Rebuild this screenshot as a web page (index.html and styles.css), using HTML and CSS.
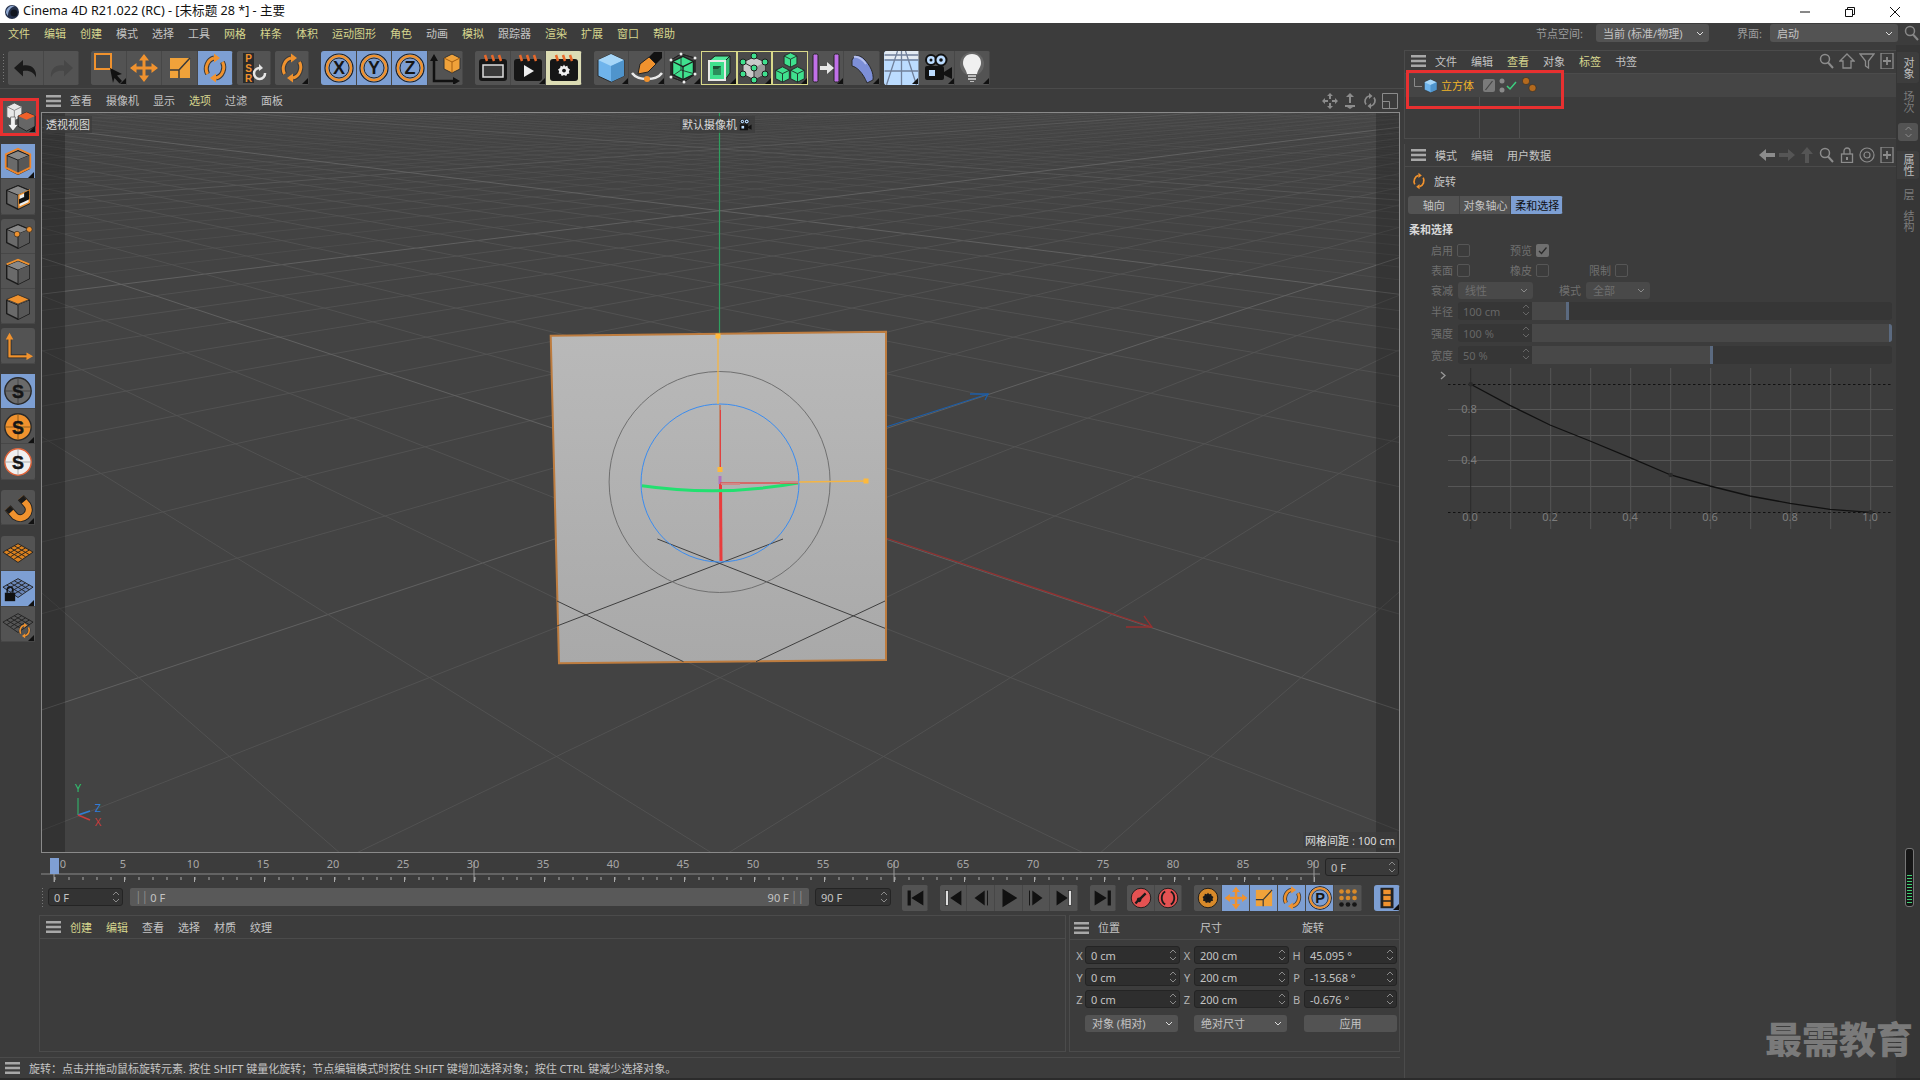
FILE: index.html
```html
<!DOCTYPE html>
<html lang="zh">
<head>
<meta charset="utf-8">
<title>Cinema 4D</title>
<link rel="stylesheet" href="styles.css">
</head>
<body>
<svg class="defs" width="0" height="0">
  <defs>
    <linearGradient id="floorg" x1="0" y1="0" x2="0" y2="1"><stop offset="0" stop-color="#b9b9b9"/><stop offset="1" stop-color="#a9a9a9"/></linearGradient>
    <symbol id="i-undo" viewBox="0 0 32 32"><path d="M4 16 13 8v5.500c8-1.500 14 3 13 12-2-5-6.500-7.500-13-6.500V24.500z" fill="#1a1a1a"/></symbol>
    <symbol id="i-redo" viewBox="0 0 32 32"><path d="M28 16 19 8v5.500c-8-1.500-14 3-13 12 2-5 6.500-7.500 13-6.500V24.500z" fill="#474747"/></symbol>
    <symbol id="i-select" viewBox="0 0 32 32"><rect x="2" y="2" width="16" height="15" fill="#4a4a4a" stroke="#f0922e" stroke-width="2"/><path d="M17 16l12 6-5 1.500 5 5.500-2.500 2.500-5-5.500-1.500 5z" fill="#111"/></symbol>
    <symbol id="i-move" viewBox="0 0 32 32"><path d="M16 7v18M7 16h18" stroke="#f0922e" stroke-width="3"/><path d="M16 2l5 6.500H11zM16 30l5-6.500H11zM2 16l6.500-5v10zM30 16l-6.500-5v10z" fill="#f0922e"/></symbol>
    <symbol id="i-scale" viewBox="0 0 32 32"><rect x="6" y="6" width="20" height="20" fill="#f0a23a"/><path d="M6 18h9v8M15 18 26 6" fill="none" stroke="#3a3a3a" stroke-width="1.500"/></symbol>
    <symbol id="i-rot" viewBox="0 0 32 32"><g fill="none"><path d="M8.500 22A10 11 0 0 1 15 6M23.500 10A10 11 0 0 1 17 26" stroke="#3a3a3a" stroke-width="5"/><path d="M8.500 22A10 11 0 0 1 15 6M23.500 10A10 11 0 0 1 17 26" stroke="#f0922e" stroke-width="3"/></g><path d="M15 1.500l6 4.500-6 4.500zM17 21.500 11 26l6 4.500z" fill="#f0922e"/></symbol>
    <symbol id="i-ring" viewBox="0 0 32 32"><circle cx="16" cy="16" r="14" fill="#7d9fd3" stroke="#1f1f1f" stroke-width="1.200"/><circle cx="16" cy="16" r="12" fill="none" stroke="#f0922e" stroke-width="2.500"/><circle cx="16" cy="16" r="10" fill="#7d9fd3" stroke="#2a2a2a"/></symbol>
    <symbol id="i-coord" viewBox="0 0 32 32"><path d="M5 8v21h22" fill="none" stroke="#111" stroke-width="2.500"/><path d="M5 2l4 7H1zM31 29l-7-4v8z" fill="#111"/><path d="M15 6l8-4 8 4v11l-8 4-8-4z" fill="#f0a23a" stroke="#333"/><path d="M15 6l8 4 8-4M23 10v11" fill="none" stroke="#a55f10"/></symbol>
    <symbol id="i-clap" viewBox="0 0 32 32"><rect x="2" y="7" width="28" height="22" rx="3" fill="#161616"/><path d="M8 3l2 6M15 3l2 6M22 3l2 6" stroke="#e8682a" stroke-width="2.500"/></symbol>
    <symbol id="i-gear" viewBox="0 0 16 16"><path d="M8 0l1.500 2.500 3-.7.700 3L16 6.500 14.500 9l.7 3-3 .7L11 15.300 8 14 5 15.300 3.800 12.700l-3-.7.700-3L0 6.500l2.800-1.700.7-3 3 .7z" fill="currentColor"/><circle cx="8" cy="8" r="2.500" fill="#161616"/></symbol>
    <symbol id="i-bcube" viewBox="0 0 32 32"><path d="M16 2 29 8v16l-13 6-13-6V8z" fill="#6fb4ec" stroke="#2a2a2a"/><path d="M3 8l13 6 13-6-13-6z" fill="#a6d6f8"/><path d="M16 14 29 8v16l-13 6z" fill="#4f94cc"/></symbol>
    <symbol id="i-pen" viewBox="0 0 32 32"><path d="M31 0h-8l-7 7 7 7 8-8z" fill="#111"/><path d="M18 5l7 7-8 8-10 2 2-10z" fill="#f0922e" stroke="#222"/><path d="M1 21c6 8 24 8 30 0" fill="none" stroke="#e8e8e8" stroke-width="2.500"/><circle cx="16" cy="27" r="3" fill="#f0922e"/></symbol>
    <symbol id="i-gc" viewBox="0 0 20 20"><path d="M10 1l8 4v10l-8 4-8-4V5z" fill="#3fe08e" stroke="#1d1d1d"/><path d="M2 5l8 4 8-4" fill="none" stroke="#1d1d1d"/><path d="M10 9v10" stroke="#1d1d1d"/></symbol>
    <symbol id="i-frame" viewBox="0 0 32 32"><path d="M4 8 14 2l14 4v16l-11 8-13-5z" fill="#444" stroke="#1d1d1d"/><use href="#i-gc" x="3" y="3" width="26" height="26"/><path d="M4 8 14 2l14 4v16l-11 8-13-5zM14 2v16l-10 7M14 18l14 4" fill="none" stroke="#222" stroke-width=".800"/><g fill="#eee"><circle cx="4" cy="8" r="1.500"/><circle cx="14" cy="2" r="1.500"/><circle cx="28" cy="6" r="1.500"/><circle cx="28" cy="22" r="1.500"/><circle cx="17" cy="30" r="1.500"/><circle cx="4" cy="25" r="1.500"/></g></symbol>
    <symbol id="i-hbox" viewBox="0 0 32 32"><path d="M6 9l6-5h15l-5 5z" fill="#4fe89a" stroke="#1d1d1d"/><path d="M22 9l5-5v17l-5 7z" fill="#35b873" stroke="#1d1d1d"/><rect x="6" y="9" width="16" height="19" fill="#3fe08e" stroke="#e8e8e8" stroke-width="2"/><path d="M10 14h8v9h-8z" fill="#2b8f5c"/><path d="M10 14h8l-3 3h-5z" fill="#1b4f35"/></symbol>
    <symbol id="i-nodes" viewBox="0 0 32 32"><path d="M16 5 27 10v12l-11 6-11-6V10z" fill="#c9c9c9" stroke="#333"/><path d="M16 16 27 10v12l-11 6z" fill="#9a9a9a"/><path d="M5 10l11 6v12" fill="none" stroke="#333"/><g fill="#3fe08e" stroke="#1d1d1d"><circle cx="16" cy="4" r="3"/><circle cx="5" cy="10" r="3"/><circle cx="27" cy="10" r="3"/><circle cx="16" cy="16" r="3"/><circle cx="5" cy="22" r="3"/><circle cx="27" cy="22" r="3"/><circle cx="16" cy="28" r="3"/></g></symbol>
    <symbol id="i-cubes" viewBox="0 0 32 32"><use href="#i-gc" x="8.500" y="0" width="16" height="16"/><use href="#i-gc" x="0" y="14" width="17" height="17"/><use href="#i-gc" x="15" y="14" width="17" height="17"/></symbol>
    <symbol id="i-bend" viewBox="0 0 32 32"><rect x="3" y="2" width="5" height="28" rx="1.500" fill="#c070e8" stroke="#222"/><rect x="24" y="2" width="5" height="28" rx="1.500" fill="#c070e8" stroke="#222"/><path d="M10 14h7v-4l7 6-7 6v-4h-7z" fill="#e6e6e6"/></symbol>
    <symbol id="i-slab" viewBox="0 0 32 32"><path d="M6 8C9 2 14 3 18 7 24 13 28 21 27 28l-6 3C17 21 11 15 6 14z" fill="#7d8fd8" stroke="#2a2a2a"/><path d="M8 5c5-1 9 3 12 7" fill="none" stroke="#b6c0ee" stroke-width="2"/></symbol>
    <symbol id="i-floor" viewBox="0 0 34 34"><rect x="0" y="0" width="34" height="8" fill="#e3ebf3"/><rect x="0" y="8" width="34" height="26" fill="#bcdcff"/><path d="M0 4h34M0 9h34M0 20h34M13 0 2 34M21 0 32 34M17 0v34" stroke="#71809a" stroke-width="1.300" fill="none"/></symbol>
    <symbol id="i-cam" viewBox="0 0 32 32"><circle cx="10" cy="8" r="5" fill="#bcdcff" stroke="#111" stroke-width="2"/><circle cx="20" cy="8" r="5.500" fill="#bcdcff" stroke="#111" stroke-width="2"/><circle cx="10" cy="8" r="1.500" fill="#111"/><circle cx="20" cy="8" r="1.800" fill="#111"/><rect x="4" y="14" width="19" height="14" rx="2" fill="#111"/><rect x="8" y="18" width="6" height="6" fill="#bcdcff"/><path d="M23 20l8-5v12l-8-4z" fill="#111"/></symbol>
    <symbol id="i-bulb" viewBox="0 0 32 32"><circle cx="16" cy="12" r="12" fill="#8a8a8a" opacity=".35"/><path d="M16 2c6 0 9 4 9 9 0 4-3 6-4 11H11c-1-5-4-7-4-11 0-5 3-9 9-9z" fill="#f0f0f0"/><path d="M12 23h8v2h-8zM12 26h8v2h-8zM14 29h4v1h-4z" fill="#bdbdbd"/></symbol>
    <symbol id="i-gcube" viewBox="0 0 34 34"><path d="M17 5 29 10v14l-12 6-12-6V10z" fill="#6a6a6a" stroke="#1a1a1a" stroke-width="1.500"/><path d="M5 10l12 5 12-5-12-5z" fill="#888" stroke="#1a1a1a" stroke-width="1"/><path d="M17 15 29 10v14l-12 6z" fill="#575757"/><path d="M17 15v15" stroke="#1a1a1a"/></symbol>
    <symbol id="i-mode" viewBox="0 0 34 34"><path d="M3 6l8-4 8 4v11l-8 4-8-4z" fill="#e8e8e8" stroke="#555"/><path d="M3 6l8 4 8-4M11 10v11" fill="none" stroke="#888"/><path d="M15 16l9-4 9 4v11l-9 5-9-5z" fill="#666" stroke="#222"/><path d="M15 16l9 4 9-4-9-4z" fill="#f0602a"/><path d="M7 17h5v8h3l-5.500 7L4 25h3z" fill="#f2f2f2" stroke="#333" stroke-width=".600"/></symbol>
    <symbol id="i-lozenge" viewBox="0 0 34 34"><path d="M17 6 33 15 17 26 1 15z" fill="currentColor" stroke="#222"/><path d="M9 10.500l16 9.500M13 8.200l16 9.500M5 12.800l16 9.500M25 10.500 9 20M21 8.200 5 17.700M29 12.800l-16 9.500" stroke="#222" stroke-width="1"/></symbol>
    <symbol id="i-spin" viewBox="0 0 8 14"><path d="M1 5 4 2l3 3M1 9l3 3 3-3" fill="none" stroke="currentColor"/></symbol>
    <symbol id="i-menu" viewBox="0 0 15 12"><path d="M0 0h15v2.500H0zM0 4.700h15v2.500H0zM0 9.400h15v2.500H0z" fill="currentColor"/></symbol>
    <symbol id="i-search" viewBox="0 0 16 16"><circle cx="6" cy="6" r="4.500" fill="none" stroke="currentColor" stroke-width="1.500"/><path d="M9 9.500l5 5.500" stroke="currentColor" stroke-width="2"/></symbol>
    <symbol id="i-plus" viewBox="0 0 16 16"><rect x="2" y="0" width="12" height="16" fill="none" stroke="currentColor" stroke-width="1.300"/><path d="M8 4v8M4 8h8" stroke="currentColor" stroke-width="1.800"/></symbol>
    <symbol id="i-chev" viewBox="0 0 8 5"><path d="M1 1l3 3 3-3" fill="none" stroke="currentColor"/></symbol>
  </defs>
</svg>

<div class="app">
  <header class="titlebar">
    <svg class="logo" viewBox="0 0 16 16"><circle cx="8" cy="8" r="7" fill="#24304a"/><path d="M2 9a7 7 0 0 1 9-7C7 3 4 6 4 12z" fill="#8fa8d0"/><circle cx="10" cy="9" r="3.500" fill="#11161f"/></svg>
    <span class="title">Cinema 4D R21.022 (RC) - [未标题 28 *] - 主要</span>
    <div class="winctl">
      <svg width="10" height="10" viewBox="0 0 10 10"><path d="M0 5h10" stroke="#111"/></svg>
      <svg width="10" height="10" viewBox="0 0 10 10"><path d="M.5 2.500h7v7h-7zM2.500 2.500v-2h7v7h-2" fill="none" stroke="#111"/></svg>
      <svg width="10" height="10" viewBox="0 0 10 10"><path d="M0 0l10 10M10 0 0 10" stroke="#111"/></svg>
    </div>
  </header>

  <nav class="menubar">
    <span class="y">文件</span><span class="y">编辑</span><span class="y">创建</span><span>模式</span><span>选择</span><span>工具</span><span class="y">网格</span><span class="y">样条</span><span class="y">体积</span><span class="y">运动图形</span><span class="y">角色</span><span>动画</span><span class="y">模拟</span><span>跟踪器</span><span class="y">渲染</span><span class="y">扩展</span><span class="y">窗口</span><span class="y">帮助</span>
    <span class="node-label">节点空间:</span>
    <div class="select sel-node">当前 (标准/物理)<svg class="chev"><use href="#i-chev"/></svg></div>
    <span class="ui-label">界面:</span>
    <div class="select sel-ui">启动<svg class="chev"><use href="#i-chev"/></svg></div>
    <svg class="top-search"><use href="#i-search"/></svg>
  </nav>

  <main class="main">
    <section class="leftcol">
      <div class="toolbar">
        <div class="grip-v"></div>
        <div class="group"><div class="tb"><svg class="ic"><use href="#i-undo"/></svg></div><div class="tb"><svg class="ic"><use href="#i-redo"/></svg></div></div>
        <div class="group sep"><div class="tb more"><svg class="ic"><use href="#i-select"/></svg></div><div class="tb"><svg class="ic"><use href="#i-move"/></svg></div><div class="tb"><svg class="ic"><use href="#i-scale"/></svg></div><div class="tb on"><svg class="ic"><use href="#i-rot"/></svg></div></div>
        <div class="group"><div class="tb narrow">
          <svg class="ic" viewBox="0 0 32 32"><rect x="5" y="1" width="11" height="30" fill="#2a2a2a"/><text class="psr" x="10.500" y="10">P</text><text class="psr" x="10.500" y="20">S</text><text class="psr" x="10.500" y="30">R</text><path d="M27 21a5.500 5.500 0 1 1-5-5" fill="none" stroke="#e6e6e6" stroke-width="2.500"/><path d="M21 12l4 4-4 3z" fill="#e6e6e6"/></svg>
        </div></div>
        <div class="group"><div class="tb narrow more"><svg class="ic"><use href="#i-rot"/></svg></div></div>
        <div class="group sep"><div class="tb on">
          <svg class="ic" viewBox="0 0 32 32"><use href="#i-ring"/><text class="axis" x="16" y="22">X</text></svg></div><div class="tb on">
          <svg class="ic" viewBox="0 0 32 32"><use href="#i-ring"/><text class="axis" x="16" y="22">Y</text></svg></div><div class="tb on">
          <svg class="ic" viewBox="0 0 32 32"><use href="#i-ring"/><text class="axis" x="16" y="22">Z</text></svg></div><div class="tb"><svg class="ic"><use href="#i-coord"/></svg></div></div>
        <div class="group sep">
          <div class="tb"><svg class="ic" viewBox="0 0 32 32"><use href="#i-clap"/><rect x="6" y="13" width="20" height="12" fill="#3a3a3a" stroke="#ddd" stroke-width="1.500"/></svg></div>
          <div class="tb more"><svg class="ic" viewBox="0 0 32 32"><use href="#i-clap"/><path d="M12 13l10 6-10 6z" fill="#eee"/></svg></div>
          <div class="tb cream"><svg class="ic" viewBox="0 0 32 32"><use href="#i-clap"/><use href="#i-gear" x="10" y="12" width="12" height="13" color="#eee"/></svg></div>
        </div>
        <div class="group sep">
          <div class="tb wide more"><svg class="ic"><use href="#i-bcube"/></svg></div>
          <div class="tb wide more"><svg class="ic"><use href="#i-pen"/></svg></div>
          <div class="tb wide more"><svg class="ic"><use href="#i-frame"/></svg></div>
          <div class="tb wide lit more"><svg class="ic"><use href="#i-hbox"/></svg></div>
          <div class="tb wide lit more"><svg class="ic"><use href="#i-nodes"/></svg></div>
          <div class="tb wide lit more"><svg class="ic"><use href="#i-cubes"/></svg></div>
          <div class="tb wide more"><svg class="ic"><use href="#i-bend"/></svg></div>
          <div class="tb wide more"><svg class="ic"><use href="#i-slab"/></svg></div>
        </div>
        <div class="group">
          <div class="tb more flush"><svg class="ic-full"><use href="#i-floor"/></svg></div>
          <div class="tb more"><svg class="ic"><use href="#i-cam"/></svg></div>
          <div class="tb more"><svg class="ic"><use href="#i-bulb"/></svg></div>
        </div>
      </div>

      <div class="mid">
        <aside class="leftbar">
          <div class="modebox"><div class="lb more"><svg class="ic"><use href="#i-mode"/></svg></div></div>
          <div class="group-v g-a">
            <div class="lb on more"><svg class="ic"><use href="#i-gcube"/></svg><svg class="ic-over" viewBox="0 0 34 34"><path d="M17 4 30 10v14l-13 6.500L4 24V10z" fill="none" stroke="#f0862a" stroke-width="2"/></svg></div>
            <div class="lb"><svg class="ic"><use href="#i-gcube"/></svg><svg class="ic-over" viewBox="0 0 34 34"><path d="M18 16 29 11v13l-11 5z" fill="#eee" stroke="#f0922e" stroke-width="1.500"/><path d="M18 20.500l5.500-2.500v5l-5.500 2.500zM23.500 13.500l5.500-2.500v5l-5.500 2.500zM23.500 18l5.500-2.500v5L23.500 23z" fill="#111"/></svg></div>
          </div>
          <div class="group-v">
            <div class="lb"><svg class="ic"><use href="#i-gcube"/></svg><svg class="ic-over" viewBox="0 0 34 34"><circle cx="16" cy="15" r="3" fill="#f0922e" stroke="#222" stroke-width=".700"/><circle cx="29" cy="10" r="3" fill="#f0922e" stroke="#222" stroke-width=".700"/></svg></div>
            <div class="lb"><svg class="ic"><use href="#i-gcube"/></svg><svg class="ic-over" viewBox="0 0 34 34"><path d="M5 10 17 5l12 5" fill="none" stroke="#f0922e" stroke-width="2"/></svg></div>
            <div class="lb"><svg class="ic"><use href="#i-gcube"/></svg><svg class="ic-over" viewBox="0 0 34 34"><path d="M5 10l12 5 12-5-12-5z" fill="#f0922e" stroke="#222" stroke-width=".700"/></svg></div>
          </div>
          <div class="group-v"><div class="lb"><svg class="ic" viewBox="0 0 34 34"><path d="M8 8v20h19" fill="none" stroke="#222" stroke-width="4"/><path d="M8 8v20h19" fill="none" stroke="#f0922e" stroke-width="2.500"/><path d="M8 3l4 7H4zM33 28l-7-4v8z" fill="#f0922e"/></svg></div></div>
          <div class="group-v g-far">
            <div class="lb on"><svg class="ic" viewBox="0 0 34 34"><circle cx="17" cy="17" r="14" fill="#6a6a6a" stroke="#2a2a2a" stroke-width="1.500"/><path d="M3 17h28M17 3v28" stroke="#444"/><text class="snap" x="17" y="24">S</text></svg></div>
            <div class="lb more"><svg class="ic" viewBox="0 0 34 34"><circle cx="17" cy="17" r="14" fill="#f0922e" stroke="#2a2a2a" stroke-width="1.500"/><path d="M3 17h28M17 3v28" stroke="#8a5a1c"/><text class="snap" x="17" y="24">S</text></svg></div>
            <div class="lb"><svg class="ic" viewBox="0 0 34 34"><circle cx="17" cy="17" r="14" fill="#f0f0f0" stroke="#e0643a" stroke-width="1.500"/><path d="M3 17h28M17 3v28" stroke="#aaa"/><text class="snap" x="17" y="24">S</text></svg></div>
          </div>
          <div class="group-v g-far"><div class="lb more"><svg class="ic" viewBox="0 0 34 34"><path d="M20 7 27 15A9 9 0 0 1 14 27L6 18" fill="none" stroke="#222" stroke-width="8.500"/><path d="M20 7 27 15A9 9 0 0 1 14 27L6 18" fill="none" stroke="#f0922e" stroke-width="6.500"/><path d="M20 7 23.500 11M6 18l3.800 4" stroke="#1a1a1a" stroke-width="7"/></svg></div></div>
          <div class="group-v g-last">
            <div class="lb"><svg class="ic lz-o"><use href="#i-lozenge"/></svg></div>
            <div class="lb on more"><svg class="ic lz-b"><use href="#i-lozenge"/></svg><svg class="ic-over" viewBox="0 0 34 34"><rect x="3" y="22" width="11" height="9" fill="#111"/><path d="M5.500 22v-3a3 3 0 0 1 6 0v3" fill="none" stroke="#111" stroke-width="1.500"/></svg></div>
            <div class="lb more"><svg class="ic lz-d"><use href="#i-lozenge"/></svg><svg class="ic-over" viewBox="0 0 34 34"><use href="#i-rot" x="15" y="15" width="18" height="18"/></svg></div>
          </div>
        </aside>

        <div class="center">
          <div class="vp-head">
            <svg class="menu-ic"><use href="#i-menu"/></svg>
            <div class="menu-items"><span>查看</span><span>摄像机</span><span>显示</span><span class="y">选项</span><span>过滤</span><span>面板</span></div>
            <div class="nav-ics">
              <svg width="16" height="16" viewBox="0 0 16 16"><path d="M8 0l3 3H9v3H7V3H5zM8 16l3-3H9v-3H7v3H5zM0 8l3-3v2h3v2H3v2zM16 8l-3-3v2h-3v2h3v2z" fill="currentColor"/></svg>
              <svg width="16" height="16" viewBox="0 0 16 16"><path d="M8 0l4 4H9v6H7V4H4zM3 12h10v2H3z" fill="currentColor"/><path d="M8 16l3-2H5z" fill="currentColor"/></svg>
              <svg width="16" height="16" viewBox="0 0 16 16"><path d="M4 11.500A5.500 5.500 0 0 1 7 3M12 4.500A5.500 5.500 0 0 1 9 13" fill="none" stroke="currentColor" stroke-width="1.700"/><path d="M7 0l3.500 3L7 6zM9 10l-3.500 3L9 16z" fill="currentColor"/></svg>
              <svg width="16" height="16" viewBox="0 0 16 16"><path d="M.5.5h15v15H.5zM.5 8.500h7v7" fill="none" stroke="currentColor"/></svg>
            </div>
          </div>

          <div class="viewport">
            <svg class="scene" viewBox="41 112 1359 741" preserveAspectRatio="none">
              <rect x="41" y="112" width="1359" height="741" fill="#434343"/>
              <g id="grid"></g>
              <rect x="41" y="112" width="24" height="741" fill="#000" opacity=".24"/>
              <rect x="1376" y="112" width="24" height="741" fill="#000" opacity=".2"/>
              <path d="M719.500 112V336" stroke="#2f9f5f" stroke-width="1.200"/>
              <path d="M886 427 988 394" stroke="#1c5ea8" stroke-width="1.300"/>
              <path d="M970 394h18l-3 6" fill="none" stroke="#1c5ea8" stroke-width="1.300"/>
              <path d="M886 538 1152 627" stroke="#963030" stroke-width="1.300"/>
              <path d="M1126 627h26l-8-11" fill="none" stroke="#963030" stroke-width="1.300"/>
              <path d="M550.700 335.700 886 331.700V660L559 663.300z" fill="url(#floorg)" stroke="#bd7c3f" stroke-width="2"/>
              <g fill="none" stroke="#3f3f3f" stroke-width="1">
                <path d="M657.400 539 885 628.300M783 539 557 626M557 601 683.500 661.700M885 601 756 661.700"/>
              </g>
              <circle cx="719.600" cy="482" r="110.500" fill="none" stroke="#707070" stroke-width="1"/>
              <circle cx="720" cy="483" r="79" fill="none" stroke="#3a8cf0" stroke-width="1"/>
              <path d="M718 336V404" stroke="#f4b545" stroke-width="1.300"/>
              <path d="M720 405V470" stroke="#c07a58" stroke-width="1.500"/>
              <path d="M720.500 470V410" stroke="#e04040" stroke-width="1"/>
              <path d="M720 476V484" stroke="#b070c0" stroke-width="3"/>
              <path d="M720.500 484 721 561" stroke="#e83c3c" stroke-width="3"/>
              <path d="M642 485.700Q720 497 798 483" fill="none" stroke="#22e070" stroke-width="3"/>
              <path d="M720 483H798" stroke="#e05050" stroke-width="1.500"/>
              <path d="M721 484H740M780 482H798" stroke="#d08888" stroke-width="2"/>
              <path d="M799 482 866 481" stroke="#f4b545" stroke-width="1.300"/>
              <g fill="#fdb93c"><rect x="715.500" y="333.500" width="5" height="5"/><rect x="717.500" y="467" width="5" height="5"/><rect x="863.500" y="478.500" width="5" height="5"/></g>
              <path d="M78 815V798" stroke="#2fbf6f"/><path d="M78 815 90 811" stroke="#2f7fd8" stroke-width="1.500"/><path d="M78 815 90 820" stroke="#c83c3c" stroke-width="1.500"/>
              <text class="mini m-y" x="78" y="792">Y</text><text class="mini m-z" x="98" y="812">Z</text><text class="mini m-x" x="98" y="826">X</text>
            </svg>
            <div class="vp-label vp-persp">透视视图</div>
            <div class="vp-label vp-cam">默认摄像机<svg width="16" height="14" viewBox="0 0 32 32"><use href="#i-cam"/></svg></div>
            <div class="vp-label vp-grid">网格间距 : 100 cm</div>
          </div>

          <div class="ruler-row">
            <svg class="ruler" viewBox="41 853 1279 31">
              <defs>
                <pattern id="tk" x="54.500" y="877" width="14" height="4" patternUnits="userSpaceOnUse"><rect width="1" height="3" fill="#a8a8a8"/></pattern>
                <pattern id="tk5" x="54" y="877" width="70" height="5" patternUnits="userSpaceOnUse"><rect width="1" height="5" fill="#a8a8a8"/></pattern>
              </defs>
              <rect x="54" y="877" width="1261" height="3" fill="url(#tk)"/>
              <rect x="54" y="877" width="1261" height="5" fill="url(#tk5)"/>
              <path d="M41 874H1320" stroke="#8a8a8a"/>
              <path d="M54 874V882M474 862V882M894 862V882M1314 862V882" stroke="#9a9a9a"/>
              <rect x="50" y="858" width="9" height="16" fill="#7f9fd4"/>
              <g class="rl"><text x="63" y="868">0</text><text x="123" y="868">5</text><text x="193" y="868">10</text><text x="263" y="868">15</text><text x="333" y="868">20</text><text x="403" y="868">25</text><text x="473" y="868">30</text><text x="543" y="868">35</text><text x="613" y="868">40</text><text x="683" y="868">45</text><text x="753" y="868">50</text><text x="823" y="868">55</text><text x="893" y="868">60</text><text x="963" y="868">65</text><text x="1033" y="868">70</text><text x="1103" y="868">75</text><text x="1173" y="868">80</text><text x="1243" y="868">85</text><text x="1313" y="868">90</text></g>
            </svg>
            <div class="field f-end">0 F<svg class="spin"><use href="#i-spin"/></svg></div>
          </div>

          <div class="transport">
            <div class="grip-v t-grip"></div>
            <div class="field f-start">0 F<svg class="spin"><use href="#i-spin"/></svg></div>
            <div class="range"><span class="bars">||</span><span class="r-l">0 F</span><span class="r-r">90 F</span><span class="bars">||</span></div>
            <div class="field f-stop">90 F<svg class="spin"><use href="#i-spin"/></svg></div>
            <div class="group g-t1"><div class="pb"><svg viewBox="0 0 28 26"><path d="M6 5h3.500v16H6zM23 5v16L10 13z" fill="#111"/></svg></div></div>
            <div class="group g-t2">
              <div class="pb five"><svg viewBox="0 0 28 26"><rect x="6" y="5" width="3" height="16" fill="#ddd" stroke="#222" stroke-width=".700"/><path d="M23 5v16L11 13z" fill="#111"/></svg></div>
              <div class="pb five"><svg viewBox="0 0 28 26"><path d="M18 5v16L7 13z" fill="#111"/><path d="M21 5v16" stroke="#111"/></svg></div>
              <div class="pb five"><svg viewBox="0 0 28 26"><path d="M7 3v20l16-10z" fill="#111"/></svg></div>
              <div class="pb five"><svg viewBox="0 0 28 26"><path d="M10 5v16l11-8z" fill="#111"/><path d="M7 5v16" stroke="#111"/></svg></div>
              <div class="pb five"><svg viewBox="0 0 28 26"><path d="M6 5v16l12-8z" fill="#111"/><rect x="19" y="5" width="3" height="16" fill="#ddd" stroke="#222" stroke-width=".700"/></svg></div>
            </div>
            <div class="group g-t3"><div class="pb"><svg viewBox="0 0 28 26"><path d="M5 5v16l13-8z" fill="#111"/><path d="M19 5h3.500v16H19z" fill="#111"/></svg></div></div>
            <div class="group g-t4">
              <div class="pb"><svg viewBox="0 0 28 26"><circle cx="14" cy="13" r="10.500" fill="#e45252" stroke="#1a1a1a"/><path d="M19 8l-6 6M8 19l4-4.500" stroke="#1a1a1a" stroke-width="2.500"/><circle cx="12" cy="15" r="2.500" fill="#1a1a1a"/></svg></div>
              <div class="pb"><svg viewBox="0 0 28 26"><circle cx="14" cy="13" r="10.500" fill="#e45252" stroke="#1a1a1a"/><path d="M11 6c-5 3-5 11 0 14M17 6c5 3 5 11 0 14" fill="none" stroke="#1a1a1a" stroke-width="2"/></svg></div>
            </div>
            <div class="group g-t5">
              <div class="pb"><svg viewBox="0 0 28 26"><circle cx="14" cy="13" r="10.500" fill="#d88a2a" stroke="#1a1a1a"/><use href="#i-gear" x="8" y="7" width="12" height="12" color="#1a1a1a"/></svg></div>
              <div class="pb on"><svg viewBox="0 0 32 32"><use href="#i-move"/></svg></div>
              <div class="pb on"><svg viewBox="0 0 32 32"><use href="#i-scale"/></svg></div>
              <div class="pb on"><svg viewBox="0 0 32 32"><use href="#i-rot"/></svg></div>
              <div class="pb on"><svg viewBox="0 0 32 32"><use href="#i-ring"/><text class="axis" x="16" y="22">P</text></svg></div>
              <div class="pb"><svg viewBox="0 0 28 26"><g fill="#d88a2a"><circle cx="7" cy="6" r="2.500"/><circle cx="14" cy="6" r="2.500"/><circle cx="21" cy="6" r="2.500"/><circle cx="7" cy="13" r="2.500"/><circle cx="14" cy="13" r="2.500"/><circle cx="21" cy="13" r="2.500"/></g><g fill="#161616"><circle cx="7" cy="20" r="2.500"/><circle cx="14" cy="20" r="2.500"/><circle cx="21" cy="20" r="2.500"/></g></svg></div>
            </div>
            <div class="group g-t6"><div class="pb on more"><svg viewBox="0 0 28 26"><rect x="7" y="2" width="14" height="22" fill="#222"/><path d="M10 4h8v5h-8zM10 10.500h8v5h-8zM10 17h8v5h-8z" fill="#f0922e"/></svg></div></div>
          </div>

          <div class="bottom">
            <section class="materials">
              <div class="panel-head">
                <svg class="menu-ic"><use href="#i-menu"/></svg>
                <div class="menu-items"><span class="y">创建</span><span class="y">编辑</span><span>查看</span><span>选择</span><span>材质</span><span>纹理</span></div>
              </div>
            </section>
            <section class="coords">
              <div class="coord-head">
                <svg class="menu-ic"><use href="#i-menu"/></svg>
                <span class="ch-a">位置</span><span class="ch-b">尺寸</span><span class="ch-c">旋转</span>
              </div>
              <div class="coord-grid">
                <span class="cl">X</span><div class="field">0 cm<svg class="spin"><use href="#i-spin"/></svg></div><span class="cl">X</span><div class="field">200 cm<svg class="spin"><use href="#i-spin"/></svg></div><span class="cl">H</span><div class="field">45.095 °<svg class="spin"><use href="#i-spin"/></svg></div>
                <span class="cl">Y</span><div class="field">0 cm<svg class="spin"><use href="#i-spin"/></svg></div><span class="cl">Y</span><div class="field">200 cm<svg class="spin"><use href="#i-spin"/></svg></div><span class="cl">P</span><div class="field">-13.568 °<svg class="spin"><use href="#i-spin"/></svg></div>
                <span class="cl">Z</span><div class="field">0 cm<svg class="spin"><use href="#i-spin"/></svg></div><span class="cl">Z</span><div class="field">200 cm<svg class="spin"><use href="#i-spin"/></svg></div><span class="cl">B</span><div class="field">-0.676 °<svg class="spin"><use href="#i-spin"/></svg></div>
                <span></span><div class="select c-sel">对象 (相对)<svg class="chev"><use href="#i-chev"/></svg></div><span></span><div class="select c-sel">绝对尺寸<svg class="chev"><use href="#i-chev"/></svg></div><span></span><div class="apply">应用</div>
              </div>
            </section>
          </div>
        </div>
      </div>

      <footer class="status">
        <svg class="menu-ic"><use href="#i-menu"/></svg>
        <span>旋转：点击并拖动鼠标旋转元素. 按住 SHIFT 键量化旋转；节点编辑模式时按住 SHIFT 键增加选择对象；按住 CTRL 键减少选择对象。</span>
      </footer>
    </section>

    <section class="rightcol">
      <div class="panels">
        <section class="objects">
          <div class="panel-head">
            <svg class="menu-ic"><use href="#i-menu"/></svg>
            <div class="menu-items"><span>文件</span><span>编辑</span><span class="y">查看</span><span>对象</span><span class="y">标签</span><span>书签</span></div>
            <div class="head-ics">
              <svg><use href="#i-search"/></svg>
              <svg viewBox="0 0 16 16"><path d="M8 1 15 8h-3v7H4V8H1z" fill="none" stroke="currentColor" stroke-width="1.300"/></svg>
              <svg viewBox="0 0 16 16"><path d="M1 1h14L9.500 8v7l-3-2V8z" fill="none" stroke="currentColor" stroke-width="1.300"/></svg>
              <svg><use href="#i-plus"/></svg>
            </div>
          </div>
          <div class="obj-body">
            <div class="obj-row">
              <svg class="tree" width="8" height="9" viewBox="0 0 8 9"><path d="M.5 0v8.500H8" fill="none" stroke="#8a8a8a"/></svg>
              <svg class="obj-cube" viewBox="0 0 32 32"><use href="#i-bcube"/></svg>
              <span class="obj-name">立方体</span>
              <svg class="obj-tags" width="64" height="18" viewBox="0 0 64 18"><rect x="0" y="2" width="12" height="13" rx="2" fill="#7a7a7a"/><path d="M2.500 13 9.500 4" stroke="#444" stroke-width="1.200"/><circle cx="19" cy="4" r="2.500" fill="#8a8a8a"/><circle cx="19" cy="13" r="2.500" fill="#8a8a8a"/><path d="M24 9l3 3 6-7" fill="none" stroke="#3cd080" stroke-width="1.500"/><circle cx="43" cy="4" r="3.600" fill="#b46a1e" stroke="#222" stroke-width=".500"/><circle cx="49.500" cy="11" r="3.600" fill="#b46a1e" stroke="#222" stroke-width=".500"/></svg>
            </div>
            <div class="col-lines"></div>
            <div class="red-box"></div>
          </div>
        </section>
        <section class="attrs">
          <div class="panel-head">
            <svg class="menu-ic"><use href="#i-menu"/></svg>
            <div class="menu-items"><span>模式</span><span>编辑</span><span>用户数据</span></div>
            <div class="head-ics a-ics">
              <svg viewBox="0 0 16 16"><path d="M0 8l7-6v4h9v4H7v4z" fill="currentColor"/></svg>
              <svg class="dim" viewBox="0 0 16 16"><path d="M16 8 9 2v4H0v4h9v4z" fill="currentColor"/></svg>
              <svg class="dim" viewBox="0 0 16 16"><path d="M8 0l6 7h-4v9H6V7H2z" fill="currentColor"/></svg>
              <svg><use href="#i-search"/></svg>
              <svg viewBox="0 0 16 16"><rect x="2.500" y="7" width="11" height="8.500" fill="none" stroke="currentColor" stroke-width="1.300"/><path d="M5 7V4a3 3 0 0 1 6 0v3" fill="none" stroke="currentColor" stroke-width="1.300"/><rect x="7" y="10" width="2" height="3" fill="currentColor"/></svg>
              <svg viewBox="0 0 16 16"><circle cx="8" cy="8" r="7" fill="none" stroke="currentColor" stroke-width="1.200"/><circle cx="8" cy="8" r="3" fill="none" stroke="currentColor" stroke-width="1.200"/></svg>
              <svg><use href="#i-plus"/></svg>
            </div>
          </div>
          <div class="attr-title"><svg width="18" height="18" viewBox="0 0 32 32"><use href="#i-rot"/></svg><span>旋转</span></div>
          <div class="tabs"><span>轴向</span><span>对象轴心</span><span class="active">柔和选择</span></div>
          <h3 class="sec">柔和选择</h3>
          <div class="frow"><label>启用</label><i class="box"></i><label class="g1">预览</label><i class="box checked"><svg viewBox="0 0 13 13"><path d="M3 7l2.500 2.500L10.500 3.500" fill="none" stroke="#2a2a2a" stroke-width="1.300"/></svg></i></div>
          <div class="frow"><label>表面</label><i class="box"></i><label class="g1">橡皮</label><i class="box"></i><label class="g1">限制</label><i class="box"></i></div>
          <div class="frow"><label>衰减</label><div class="select a-sel s1">线性<svg class="chev"><use href="#i-chev"/></svg></div><label class="g2">模式</label><div class="select a-sel s2">全部<svg class="chev"><use href="#i-chev"/></svg></div></div>
          <div class="srow"><label>半径</label><div class="field a-field">100 cm<svg class="spin"><use href="#i-spin"/></svg></div><div class="slider"><b style="width:10.300%"></b></div></div>
          <div class="srow"><label>强度</label><div class="field a-field">100 %<svg class="spin"><use href="#i-spin"/></svg></div><div class="slider"><b style="width:100%"></b></div></div>
          <div class="srow"><label>宽度</label><div class="field a-field">50 %<svg class="spin"><use href="#i-spin"/></svg></div><div class="slider"><b style="width:50.300%"></b></div></div>
          <svg class="graph" viewBox="1440 366 456 164">
            <path d="M1510.700 367V528M1550.700 367V528M1590.700 367V528M1630.700 367V528M1670.700 367V528M1710.700 367V528M1750.700 367V528M1790.700 367V528M1830.700 367V528M1870.700 367V528M1448 408.500H1893M1448 434.500H1893M1448 459.500H1893M1448 485.500H1893" stroke="#565656"/>
            <path d="M1470.700 367V528" stroke="#2c2c2c"/>
            <path d="M1448 383.500H1893M1448 511.500H1893" stroke="#111" stroke-dasharray="2.500 2.500"/>
            <path d="M1441 371l4 3.500-4 3.500" fill="none" stroke="#999" stroke-width="1.300"/>
            <path d="M1470.700 383.300 1510 404.300 1550 424 1590 440 1630 456.700 1670.700 474 1710 485 1750 495 1790 502.300 1830 508.300 1870.700 511.300" fill="none" stroke="#111" stroke-width="1.300"/>
            <g fill="#2a2a2a"><circle cx="1470.700" cy="383.300" r="2.300"/><circle cx="1670.700" cy="474" r="2.300"/><circle cx="1870.700" cy="511.300" r="2.300"/></g>
            <g class="gl"><text x="1469" y="412">0.8</text><text x="1469" y="463">0.4</text><text x="1470" y="520">0.0</text><text x="1550" y="520">0.2</text><text x="1630" y="520">0.4</text><text x="1710" y="520">0.6</text><text x="1790" y="520">0.8</text><text x="1870" y="520">1.0</text></g>
          </svg>
        </section>
      </div>
      <aside class="sidetabs">
        <span class="vt active">对象</span>
        <span class="vt vt-scene">场次</span>
        <div class="updown"><svg width="9" height="14"><use href="#i-spin"/></svg></div>
        <span class="vt active t-attr">属性</span>
        <span class="vt t-layer">层</span>
        <span class="vt t-struct">结构</span>
        <div class="meter"><div class="meter-fill"></div></div>
      </aside>
    </section>
  </main>
  <div class="strip"></div>
  <div class="watermark">最需教育</div>
</div>
<script src="script.js"></script>
</body>
</html>
```

FILE: styles.css
```css
* { box-sizing: border-box; }
html, body { margin: 0; padding: 0; background: #3c3c3c; }
body { font-family: "Noto Sans", "Noto Sans CJK SC", sans-serif; font-size: 11px; line-height: 1; color: #c4c4c4; }
.defs { position: absolute; }
.app { position: relative; width: 1920px; height: 1080px; overflow: hidden; display: flex; flex-direction: column; }
.y { color: #d6d68e; }

.titlebar { height: 23px; background: #fff; color: #111; display: flex; align-items: center; padding-left: 4px; font-size: 12.6px; flex: none; }
.logo { width: 16px; height: 16px; margin-right: 3px; }
.winctl { margin-left: auto; display: flex; gap: 35px; padding-right: 20px; }
.winctl svg { display: block; }

.menubar { height: 22px; flex: none; display: flex; align-items: center; gap: 14px; padding: 0 0 2px 8px; }
.node-label { margin-left: 847px; color: #9c9c9c; }
.ui-label { margin-left: 14px; color: #9c9c9c; margin-right: -6px; }
.top-search { width: 16px; height: 16px; color: #888; margin-left: -8px; }
.select { display: flex; align-items: center; justify-content: space-between; background: #535353; color: #c4c4c4; border-radius: 3px; padding: 0 5px 0 7px; }
.chev { width: 8px; height: 5px; color: #ddd; flex: none; }
.sel-node { width: 113px; height: 18px; margin-left: -1px; }
.sel-ui { width: 128px; height: 18px; }

.main { flex: 1; display: flex; min-height: 0; }
.leftcol { width: 1404px; flex: none; display: flex; flex-direction: column; }
.toolbar { height: 44px; flex: none; display: flex; align-items: flex-start; padding: 6px 0 0 8px; gap: 4px; border-bottom: 1px solid #4b4b4b; position: relative; }
.grip-v { position: absolute; left: 2px; top: 8px; width: 3px; height: 30px; background-image: radial-gradient(#777 .7px, transparent .8px); background-size: 3px 3px; }
.group { display: flex; border-radius: 3px; overflow: hidden; background: #535353; }
.group.sep { margin-left: 8px; }
.tb { position: relative; width: 35.5px; height: 34px; display: flex; align-items: center; justify-content: center; background: #535353; box-shadow: inset -1px 0 #474747; }
.tb.wide { width: 35.750px; }
.tb.narrow { width: 34px; }
.tb.on { background: #7d9fd3; }
.tb.cream { background: #dcdcb4; }
.tb.lit { background: #4a4a4a; box-shadow: inset 0 0 0 1px #d9d98a; }
.tb.flush { background: #bcdcff; }
.ic { width: 32px; height: 32px; display: block; }
.ic-full { width: 35px; height: 34px; display: block; }
.more::after { content: ""; position: absolute; right: 1px; bottom: 1px; border: 3px solid transparent; border-right-color: #111; border-bottom-color: #111; }
.psr { font: 700 10px "Liberation Sans", sans-serif; fill: #f0922e; text-anchor: middle; }
.axis { font: 700 18px "Liberation Sans", sans-serif; fill: #161616; text-anchor: middle; }
.snap { font: 700 19px "Liberation Sans", sans-serif; fill: #161616; text-anchor: middle; stroke: #161616; stroke-width: .5px; }

.mid { height: 968px; flex: none; display: flex; position: relative; }
.leftbar { width: 39px; flex: none; display: flex; flex-direction: column; align-items: flex-start; padding: 9px 0 0 1px; gap: 4px; }
.group-v { display: flex; flex-direction: column; background: #535353; border-radius: 3px; }
.modebox { width: 39px; height: 38px; margin-left: -1px; border: 3px solid #e83030; background: #535353; }
.modebox .lb { height: 32px; width: 33px; box-shadow: none; }
.g-a { margin-top: 4px; }
.g-far { margin-top: 6px; }
.g-last { margin-top: 7px; }
.lb { position: relative; width: 34px; height: 35.3px; display: flex; align-items: center; justify-content: center; box-shadow: inset 0 -1px #474747; }
.lb.on { background: #7d9fd3; }
.ic-over { position: absolute; left: 1px; top: 1px; width: 32px; height: 32px; overflow: visible; }
.lz-o { color: #d9801e; }
.lz-b { color: #6a86b8; }
.lz-d { color: #555; }

.center { width: 1361px; flex: none; display: flex; flex-direction: column; }
.vp-head { height: 23px; flex: none; display: flex; align-items: center; padding-left: 7px; position: relative; }
.menu-ic { width: 15px; height: 12px; color: #a8a8a8; flex: none; display: block; }
.menu-items { display: flex; gap: 14px; margin-left: 9px; }
.nav-ics { position: absolute; right: 2px; top: 4px; display: flex; gap: 4px; color: #8c8c8c; }
.nav-ics svg { display: block; }
.viewport { position: relative; height: 741px; flex: none; margin-left: 2px; border: 1px solid #8a8a8a; overflow: hidden; }
.scene { position: absolute; left: -1px; top: -1px; width: 1359px; height: 741px; display: block; }
.mini { font: 11px "Noto Sans", sans-serif; text-anchor: middle; }
.m-y { fill: #2fbf6f; } .m-z { fill: #2f7fd8; } .m-x { fill: #c83c3c; }
.vp-label { position: absolute; background: rgba(60, 60, 60, .75); color: #dcdcdc; display: flex; align-items: center; padding: 0 2px; height: 17px; }
.vp-persp { left: 2px; top: 3px; }
.vp-cam { left: 638px; top: 3px; width: 75px; }
.vp-grid { right: 2px; bottom: 4px; height: 16px; }

.ruler-row { height: 31px; flex: none; display: flex; align-items: flex-start; padding-left: 2px; }
.ruler { width: 1279px; height: 31px; display: block; flex: none; }
.rl text { font: 11px "Noto Sans", sans-serif; fill: #a8a8a8; text-anchor: middle; }
.field { position: relative; display: flex; align-items: center; background: #2e2e2e; color: #c4c4c4; border: 1px solid #242424; border-radius: 3px; padding-left: 5px; height: 18px; }
.spin { position: absolute; right: 2px; top: 1px; width: 8px; height: 14px; color: #8a8a8a; }
.f-end { width: 74px; height: 18px; margin: 5px 0 0 5px; background: #3a3a3a; }

.transport { height: 31px; flex: none; display: flex; align-items: flex-start; position: relative; padding-left: 9px; }
.t-grip { left: 2px; top: 3px; height: 22px; }
.f-start { width: 75px; margin-top: 4px; background: #333; }
.range { width: 679px; height: 18px; margin: 4px 0 0 7px; background: #595959; border-radius: 2px; display: flex; align-items: center; padding: 0 5px; color: #c4c4c4; }
.range .bars { color: #8a8a8a; font-size: 12px; }
.r-l { margin-left: 2px; }
.r-r { margin-left: auto; margin-right: 2px; }
.f-stop { width: 76px; margin: 4px 0 0 6px; background: #333; }
.pb { position: relative; width: 26px; height: 26px; background: #535353; display: flex; align-items: center; justify-content: center; box-shadow: inset -1px 0 #474747; }
.pb svg { width: 26px; height: 26px; display: block; }
.pb.five { width: 27.7px; }
.pb.on { background: #7d9fd3; }
.g-t1 { margin: 1px 0 0 11px; }
.g-t2 { margin: 1px 0 0 11.5px; }
.g-t3 { margin: 1px 0 0 12px; }
.g-t4 { margin: 1px 0 0 11.5px; }
.g-t4 .pb { width: 27.2px; }
.g-t5 { margin: 1px 0 0 12px; }
.g-t5 .pb { width: 28px; }
.g-t6 { margin: 1px 0 0 12px; }

.bottom { height: 137px; flex: none; display: flex; gap: 3px; }
.materials { width: 1027px; flex: none; border: 1px solid #4b4b4b; }
.panel-head { height: 23px; display: flex; align-items: center; padding-left: 6px; border-bottom: 1px solid #4b4b4b; position: relative; }
.materials .menu-items { margin-left: 9px; }
.coords { width: 331px; flex: none; border: 1px solid #4b4b4b; }
.coord-head { height: 24px; display: flex; align-items: center; padding-left: 4px; border-bottom: 1px solid #4b4b4b; }
.ch-a { margin-left: 9px; }
.ch-b { margin-left: 80px; }
.ch-c { margin-left: 80px; }
.coord-grid { display: grid; grid-template-columns: 11px 95px 14px 95px 15px 93px; row-gap: 4px; padding: 6px 0 0 4px; }
.cl { display: flex; align-items: center; justify-content: center; color: #b4b4b4; }
.c-sel { height: 17px; margin-top: 3px; width: 93px; }
.apply { height: 17px; margin-top: 3px; background: #535353; border-radius: 3px; display: flex; align-items: center; justify-content: center; }

.status { flex: 1; display: flex; align-items: center; padding-left: 5px; gap: 9px; border-top: 1px solid #4b4b4b; margin-right: 4px; }

.rightcol { flex: 1; display: flex; min-height: 0; }
.panels { width: 492px; flex: none; display: flex; flex-direction: column; padding-top: 5px; gap: 5px; }
.objects { height: 89px; flex: none; display: flex; flex-direction: column; border: 1px solid #4b4b4b; border-right: 0; }
.objects .panel-head { height: 23px; flex: none; padding-bottom: 2px; }
.attrs .panel-head { height: 23px; flex: none; }
.menu-items span { white-space: nowrap; }
.head-ics { margin-left: auto; display: flex; gap: 4px; padding-right: 1px; color: #8c8c8c; }
.head-ics svg { width: 16px; height: 16px; display: block; }
.head-ics .dim { color: #555; }
.obj-body { flex: 1; position: relative; }
.obj-row { height: 23px; background: #454545; display: flex; align-items: center; padding-left: 9px; }
.tree { margin-top: -7px; }
.obj-cube { width: 15px; height: 16px; margin: 0 3px 0 1px; }
.obj-name { color: #f0b428; }
.obj-tags { margin-left: 9px; }
.col-lines { position: absolute; left: 74px; top: 23px; bottom: 0; width: 41px; border-left: 1px solid #4f4f4f; border-right: 1px solid #4f4f4f; }
.red-box { position: absolute; left: 1px; top: -4px; width: 158px; height: 39px; border: 3px solid #e83030; }

.attrs { flex: 1; border-left: 1px solid #4b4b4b; display: flex; flex-direction: column; min-height: 0; }
.attr-title { height: 20px; display: flex; align-items: center; gap: 6px; margin: 4px 0 5px 5px; }
.tabs { display: flex; margin-left: 3px; width: 155px; height: 18px; border-radius: 3px; overflow: hidden; background: #535353; flex: none; }
.tabs span { flex: 1; display: flex; align-items: center; justify-content: center; box-shadow: inset -1px 0 #444; white-space: nowrap; }
.tabs .active { background: #7d9fd3; color: #111; }
.sec { margin: 6px 0 2px 4px; height: 18px; display: flex; align-items: center; font-size: 11px; font-weight: 700; color: #d8d8d8; flex: none; }
.frow { height: 20px; flex: none; display: flex; align-items: center; padding-left: 26px; color: #6f6f6f; }
.frow label, .srow label { width: 22px; flex: none; white-space: nowrap; }
.box { width: 13px; height: 13px; margin-left: 4px; border: 1px solid #565656; border-radius: 2px; display: block; flex: none; }
.box.checked { background: #6f6f6f; border: 0; }
.box svg { display: block; }
.g1 { margin-left: 40px; }
.g2 { margin-left: 26px; }
.a-sel { height: 17px; background: #494949; color: #6f6f6f; }
.a-sel .chev { color: #8a8a8a; }
.s1 { width: 75px; margin-left: 5px; }
.s2 { width: 64px; margin-left: 5px; }
.srow { height: 22px; flex: none; display: flex; align-items: center; padding-left: 26px; color: #6f6f6f; }
.a-field { width: 74px; height: 18px; margin-left: 5px; background: #363636; color: #666; border: 0; border-radius: 3px 0 0 3px; flex: none; }
.a-field .spin { color: #666; }
.slider { width: 360px; height: 18px; background: #363636; border-radius: 0 3px 3px 0; flex: none; overflow: hidden; }
.slider b { display: block; height: 100%; background: #484848; border-right: 3px solid #5b6a80; }
.graph { width: 456px; height: 164px; margin: 1px 0 0 35px; display: block; flex: none; }
.gl text { font: 11px "Noto Sans", sans-serif; fill: #7c7c7c; text-anchor: middle; }

.sidetabs { width: 24px; flex: none; background: #363636; display: flex; flex-direction: column; align-items: center; padding-top: 7px; }
.vt { writing-mode: vertical-rl; text-orientation: upright; color: #7c7c7c; width: 22px; line-height: 22px; white-space: nowrap; text-align: center; flex: none; }
.vt.active { background: #3d3d3d; color: #bdbdbd; border-radius: 0 3px 3px 0; height: 31px; }
.vt-scene { margin-top: 7px; height: 24px; }
.updown { width: 20px; height: 18px; background: #535353; border-radius: 3px; margin-top: 9px; display: flex; align-items: center; justify-content: center; color: #8c8c8c; flex: none; }
.vt.t-attr { margin-top: 10px; height: 28px; }
.t-layer { margin-top: 9px; height: 12px; }
.t-struct { margin-top: 9px; height: 24px; }
.meter { width: 9px; height: 59px; margin: auto 0 171px 2px; background: #161616; border: 1px solid #777; border-radius: 3px; padding-top: 26px; flex: none; }
.meter-fill { height: 29px; margin: 0 1px; background: repeating-linear-gradient(#3ed070 0 1px, #161616 1px 3px); }

.strip { height: 2px; flex: none; background: #2b2b2b; }
.watermark { position: absolute; right: 7px; bottom: 22px; font-family: "Noto Sans CJK SC", sans-serif; font-weight: 900; font-size: 37px; line-height: 40px; color: #7a7a7a; white-space: nowrap; }
```

FILE: script.js
```js
// Builds the perspective floor grid of the viewport from its two vanishing points.
(function () {
  var g = document.getElementById('grid');
  var NS = 'http://www.w3.org/2000/svg';
  var hor = 51, spread = 1299, cx = 720, x0 = 41, x1 = 1400;

  function depth(k) {
    var inv = k >= 0 ? 0.00231 - 0.000357 * k : 0.00231 - 0.000395 * k;
    return 1 / inv;
  }

  function add(k, y0, y1) {
    var bright = k === 0 || k % 10 === 0;
    var line = document.createElementNS(NS, 'line');
    line.setAttribute('x1', x0);
    line.setAttribute('x2', x1);
    line.setAttribute('y1', y0.toFixed(2));
    line.setAttribute('y2', y1.toFixed(2));
    line.setAttribute('stroke', bright ? '#646464' : '#535353');
    line.setAttribute('stroke-width', k < -25 ? 0.5 : 1);
    line.setAttribute('stroke-opacity', k < -10 ? 0.6 : 0.9);
    g.appendChild(line);
  }

  for (var k = -60; k <= 6; k++) {
    var d = depth(k);
    add(k, hor + d * (x0 - (cx - spread)) / spread, hor + d * (x1 - (cx - spread)) / spread);
    add(k, hor + d * ((cx + spread) - x0) / spread, hor + d * ((cx + spread) - x1) / spread);
  }
})();
```
